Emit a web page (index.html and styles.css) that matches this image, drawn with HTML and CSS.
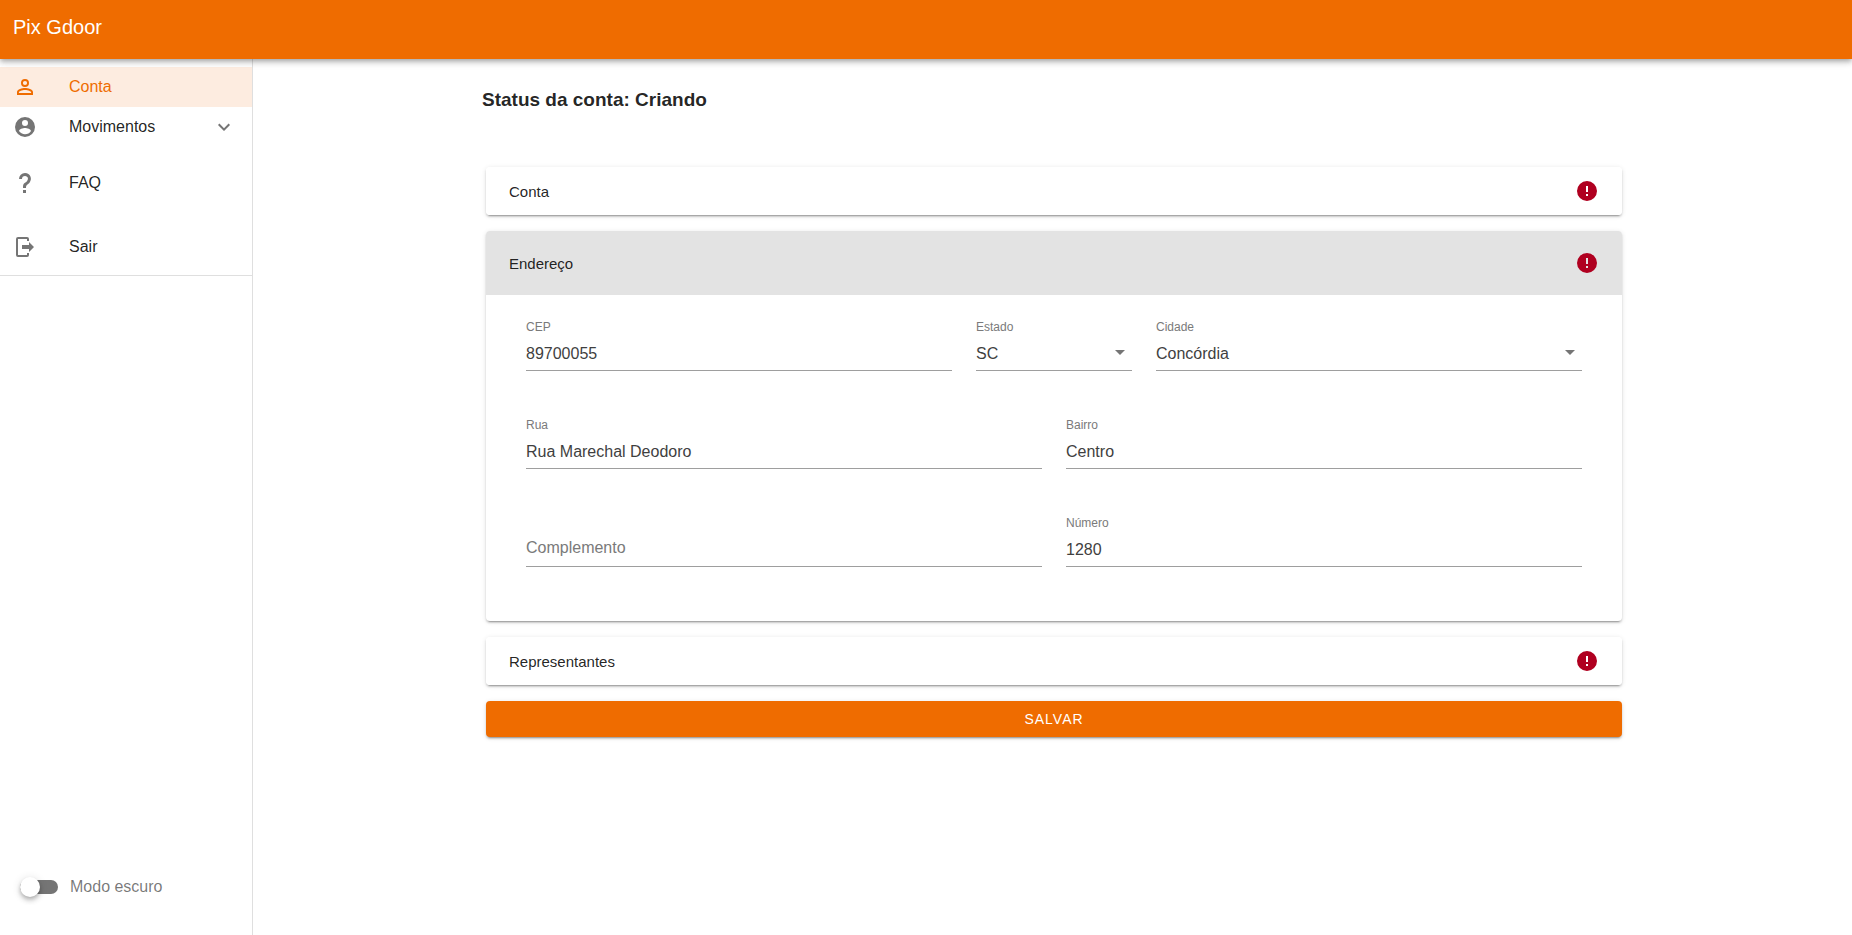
FILE: index.html
```html
<!DOCTYPE html>
<html lang="pt-BR">
<head>
<meta charset="utf-8">
<meta name="viewport" content="width=device-width, initial-scale=1">
<title>Pix Gdoor</title>
<link rel="stylesheet" href="styles.css">
</head>
<body>
<header class="topbar"><h1 class="brand">Pix Gdoor</h1></header>
<div class="layout">
  <aside class="drawer">
    <nav class="nav">
      <a class="nav-item active" href="#conta">
        <svg class="icon" viewBox="0 0 24 24" aria-hidden="true"><path d="M12 4a4 4 0 1 1 0 8 4 4 0 0 1 0-8m0 1.900a2.100 2.100 0 1 0 0 4.200 2.100 2.100 0 0 0 0-4.200M12 13c2.670 0 8 1.330 8 4v3H4v-3c0-2.670 5.330-4 8-4m0 1.900c-2.970 0-6.100 1.460-6.100 2.100v1.100h12.200V17c0-.64-3.130-2.100-6.100-2.100z"/></svg>
        <span>Conta</span>
      </a>
      <a class="nav-item" href="#movimentos">
        <svg class="icon" viewBox="0 0 24 24" aria-hidden="true"><path d="M12 19.200c-2.500 0-4.710-1.280-6-3.200.03-2 4-3.100 6-3.100s5.970 1.100 6 3.100a7.230 7.230 0 0 1-6 3.200M12 5a3 3 0 1 1 0 6 3 3 0 0 1 0-6m0-3a10 10 0 1 0 0 20 10 10 0 0 0 0-20z"/></svg>
        <span>Movimentos</span>
        <svg class="icon chevron" viewBox="0 0 24 24" aria-hidden="true"><path d="M7.410 8.580 12 13.170l4.590-4.590L18 10l-6 6-6-6z"/></svg>
      </a>
      <a class="nav-item tall" href="#faq">
        <svg class="icon" viewBox="0 0 24 24" aria-hidden="true"><path d="M10 19h3v3h-3v-3m2-17c5.350.22 7.680 5.620 4.500 9.670-.83 1-2.170 1.660-2.830 2.500C13 15 13 16 13 17h-3c0-1.670 0-3.080.67-4.080.66-1 2-1.590 2.830-2.250C15.920 8.430 15.320 5.260 12 5a3 3 0 0 0-3 3H6a6 6 0 0 1 6-6z"/></svg>
        <span>FAQ</span>
      </a>
      <a class="nav-item" href="#sair">
        <svg class="icon" viewBox="0 0 24 24" aria-hidden="true"><path d="M16 17v-3H9v-4h7V7l5 5-5 5M14 2a2 2 0 0 1 2 2v2h-2V4H5v16h9v-2h2v2a2 2 0 0 1-2 2H5a2 2 0 0 1-2-2V4a2 2 0 0 1 2-2z"/></svg>
        <span>Sair</span>
      </a>
    </nav>
    <label class="switch">
      <input class="switch-input" type="checkbox" role="switch">
      <span>Modo escuro</span>
    </label>
  </aside>
  <main class="main">
    <form class="account">
      <h2 class="status">Status da conta: Criando</h2>
      <div class="panels">
        <section class="panel">
          <button class="panel-head" type="button" aria-expanded="false"><span>Conta</span>
            <svg class="icon error" viewBox="0 0 24 24" aria-hidden="true"><path d="M13 13h-2V7h2m0 10h-2v-2h2M12 2a10 10 0 1 0 0 20 10 10 0 0 0 0-20z"/></svg></button>
        </section>
        <section class="panel">
          <button class="panel-head open" type="button" aria-expanded="true"><span>Endereço</span>
            <svg class="icon error" viewBox="0 0 24 24" aria-hidden="true"><path d="M13 13h-2V7h2m0 10h-2v-2h2M12 2a10 10 0 1 0 0 20 10 10 0 0 0 0-20z"/></svg></button>
          <div class="fields">
            <div class="field span-5"><label for="cep">CEP</label><input id="cep" type="text" value="89700055"></div>
            <div class="field span-2"><label for="estado">Estado</label><select id="estado"><option>SC</option></select>
              <svg class="icon caret" viewBox="0 0 24 24" aria-hidden="true"><path d="M7 10l5 5 5-5z"/></svg></div>
            <div class="field span-5"><label for="cidade">Cidade</label><select id="cidade"><option>Concórdia</option></select>
              <svg class="icon caret" viewBox="0 0 24 24" aria-hidden="true"><path d="M7 10l5 5 5-5z"/></svg></div>
            <div class="field span-6"><label for="rua">Rua</label><input id="rua" type="text" value="Rua Marechal Deodoro"></div>
            <div class="field span-6"><label for="bairro">Bairro</label><input id="bairro" type="text" value="Centro"></div>
            <div class="field empty span-6"><label for="complemento">Complemento</label><input id="complemento" type="text"></div>
            <div class="field span-6"><label for="numero">Número</label><input id="numero" type="text" value="1280"></div>
          </div>
        </section>
        <section class="panel">
          <button class="panel-head" type="button" aria-expanded="false"><span>Representantes</span>
            <svg class="icon error" viewBox="0 0 24 24" aria-hidden="true"><path d="M13 13h-2V7h2m0 10h-2v-2h2M12 2a10 10 0 1 0 0 20 10 10 0 0 0 0-20z"/></svg></button>
        </section>
        <button class="save" type="submit">SALVAR</button>
      </div>
    </form>
  </main>
</div>
</body>
</html>
```
FILE: styles.css
```css
* { box-sizing: border-box; }

body {
  margin: 0;
  min-height: 100vh;
  display: flex;
  flex-direction: column;
  font: 16px/24px "Liberation Sans", Arial, sans-serif;
  color: rgba(0, 0, 0, 0.87);
  background: #fff;
}

button, input, select { font: inherit; color: inherit; }

.topbar {
  position: relative;
  z-index: 1;
  padding: 11px 13px 16px;
  background: #ef6c00;
  color: #fff;
  box-shadow: 0 2px 4px -1px rgba(0, 0, 0, 0.2), 0 4px 5px rgba(0, 0, 0, 0.14), 0 1px 10px rgba(0, 0, 0, 0.12);
}

.brand { margin: 0; font-size: 20px; line-height: 32px; font-weight: 400; }

.layout { flex: 1; display: grid; grid-template-columns: 253px 1fr; }

.drawer {
  display: flex;
  flex-direction: column;
  justify-content: space-between;
  border-right: 1px solid #dfdfdf;
}

.nav { padding: 8px 0; border-bottom: 1px solid #dfdfdf; }

.nav-item {
  display: flex;
  align-items: center;
  gap: 32px;
  min-height: 40px;
  padding: 0 16px 0 13px;
  color: inherit;
  text-decoration: none;
}

.nav-item.tall { min-height: 72px; margin-bottom: 8px; }
.nav-item.active { background: #fdece0; color: #ef6c00; }

.icon { flex: none; width: 24px; height: 24px; fill: #757575; }
.active .icon { fill: #ef6c00; }
.chevron { margin-left: auto; }

.switch {
  display: flex;
  align-items: center;
  gap: 12px;
  padding: 0 20px 36px;
  color: rgba(0, 0, 0, 0.54);
}

.switch-input {
  appearance: none;
  position: relative;
  width: 38px;
  height: 14px;
  margin: 0;
  border-radius: 7px;
  background: #757575;
}

.switch-input::before {
  content: "";
  position: absolute;
  left: 0;
  top: -3px;
  width: 20px;
  height: 20px;
  border-radius: 50%;
  background: #fff;
  box-shadow: 0 2px 4px -1px rgba(0, 0, 0, 0.2), 0 4px 5px rgba(0, 0, 0, 0.14), 0 1px 10px rgba(0, 0, 0, 0.12);
}

.main { padding: 25px 0 24px 3px; }
.account { max-width: 1144px; margin: 0 auto; }
.status { margin: 0 0 51px; font-size: 19px; line-height: 32px; font-weight: 700; }
.panels { display: flex; flex-direction: column; gap: 16px; padding: 0 4px; }

.panel, .save {
  border-radius: 4px;
  box-shadow: 0 3px 1px -2px rgba(0, 0, 0, 0.2), 0 2px 2px rgba(0, 0, 0, 0.14), 0 1px 5px rgba(0, 0, 0, 0.12);
}

.panel { overflow: hidden; }

.panel-head {
  display: flex;
  align-items: center;
  justify-content: space-between;
  width: 100%;
  min-height: 48px;
  padding: 0 23px;
  border: 0;
  background: #fff;
  font-size: 15px;
  text-align: left;
}

.panel-head span { padding-top: 2px; }
.panel-head.open { min-height: 64px; background: #e3e3e3; }
.error { fill: #b00020; }

.fields {
  display: grid;
  grid-template-columns: repeat(12, 1fr);
  gap: 46px 24px;
  padding: 24px 40px 54px;
}

.span-2 { grid-column: span 2; }
.span-5 { grid-column: span 5; }
.span-6 { grid-column: span 6; }

.field { position: relative; }
.field label { display: block; font-size: 12px; line-height: 16px; color: #7a7a7a; }

.field input, .field select {
  appearance: none;
  display: block;
  width: 100%;
  height: 36px;
  padding: 2px 0 0;
  border: 0;
  border-bottom: 1px solid #9e9e9e;
  border-radius: 0;
  background: transparent;
  color: #3f3f3f;
  outline: 0;
}

.empty { padding-top: 16px; }
.empty label { position: absolute; left: 0; bottom: 7px; font-size: 16px; line-height: 24px; }
.caret { position: absolute; right: 0; bottom: 7px; pointer-events: none; }

.save {
  min-height: 36px;
  border: 0;
  background: #ef6c00;
  color: #fff;
  font-size: 14px;
  letter-spacing: 1px;
}
```
